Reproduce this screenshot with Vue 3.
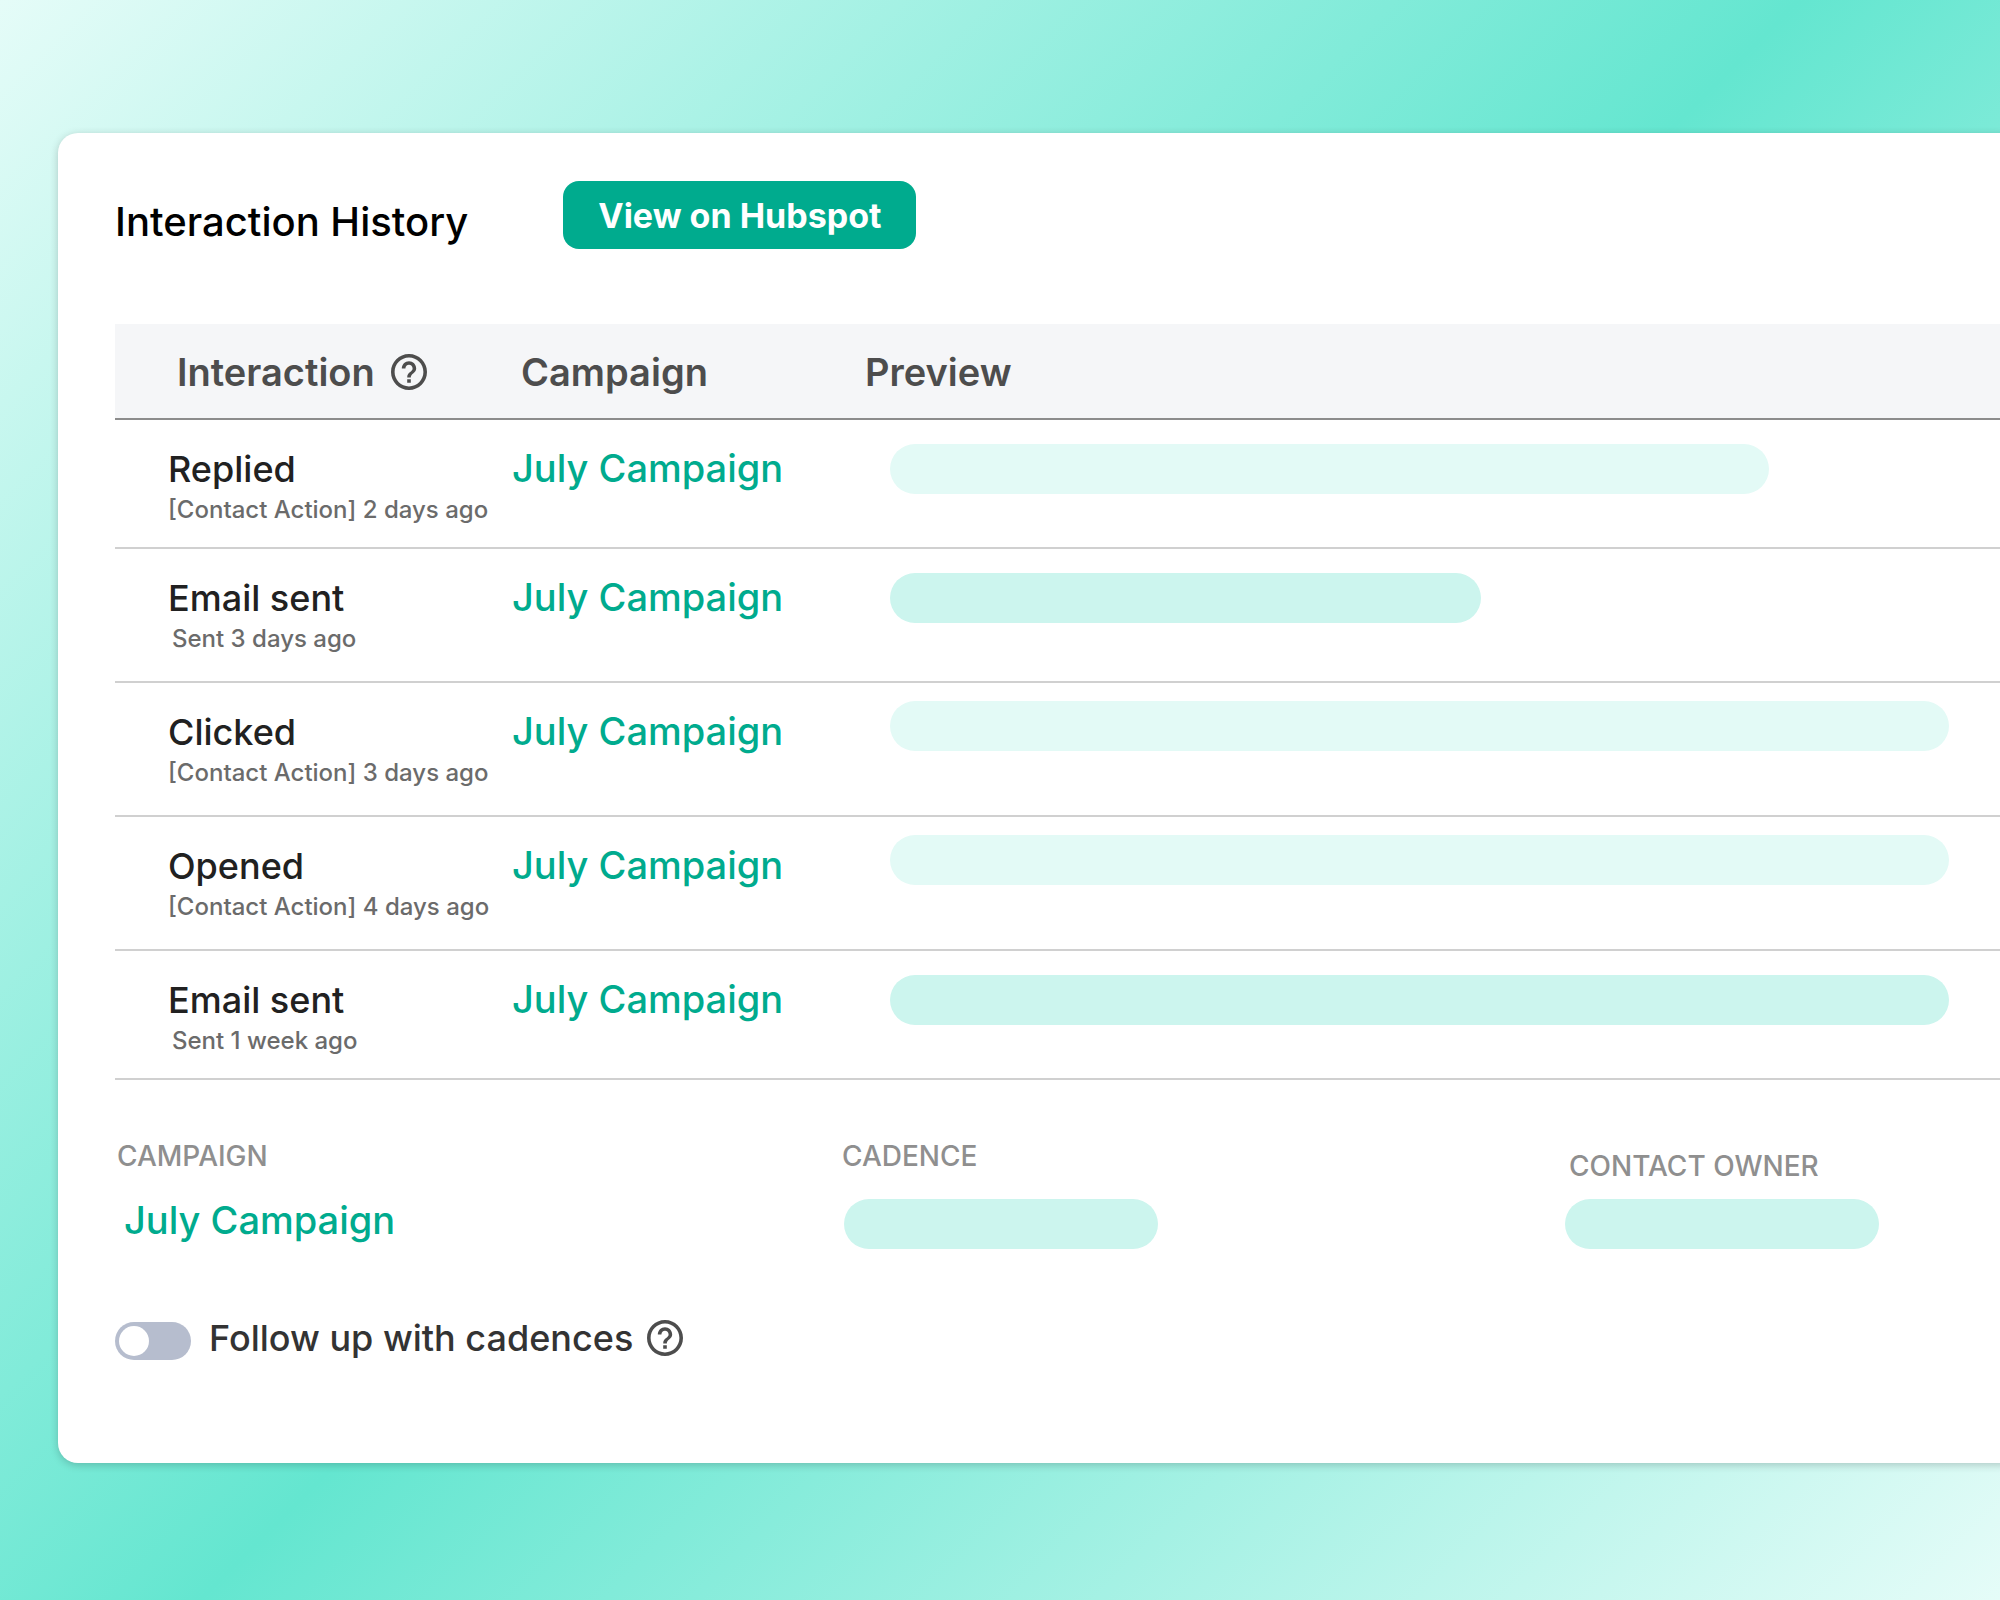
<script setup>
import { ref } from 'vue';

const followUp = ref(false);

// width is the share of the preview column taken by the placeholder
const interactions = [
  { id: 1, name: 'Replied', detail: '[Contact Action] 2 days ago', campaign: 'July Campaign', width: 79.2, type: 'contact' },
  { id: 2, name: 'Email sent', detail: 'Sent 3 days ago', campaign: 'July Campaign', width: 53.2, type: 'sent' },
  { id: 3, name: 'Clicked', detail: '[Contact Action] 3 days ago', campaign: 'July Campaign', width: 95.4, type: 'contact', tight: true },
  { id: 4, name: 'Opened', detail: '[Contact Action] 4 days ago', campaign: 'July Campaign', width: 95.4, type: 'contact', tight: true },
  { id: 5, name: 'Email sent', detail: 'Sent 1 week ago', campaign: 'July Campaign', width: 95.4, type: 'sent' }
];

const helpIcon = 'M11 18h2v-2h-2v2zm1-16C6.48 2 2 6.48 2 12s4.48 10 10 10 10-4.48 10-10S17.52 2 12 2zm0 18c-4.41 0-8-3.59-8-8s3.59-8 8-8 8 3.59 8 8-3.59 8-8 8zm0-14c-2.21 0-4 1.79-4 4h2c0-1.1.9-2 2-2s2 .9 2 2c0 2-3 1.75-3 5h2c0-2.25 3-2.5 3-5 0-2.21-1.79-4-4-4z';
</script>

<template>
  <main class="page">
    <section class="card">
      <header class="card-header">
        <h1 class="title">Interaction History</h1>
        <button type="button" class="hubspot-btn">View on Hubspot</button>
      </header>

      <table class="history">
        <thead>
          <tr>
            <th class="col-fixed" scope="col">
              <span class="th-label">
                Interaction
                <svg class="help-icon" viewBox="2 2 20 20" aria-hidden="true"><path :d="helpIcon" /></svg>
              </span>
            </th>
            <th class="col-fixed" scope="col">Campaign</th>
            <th scope="col">Preview</th>
          </tr>
        </thead>
        <tbody>
          <tr v-for="item in interactions" :key="item.id">
            <td>
              <div class="name">{{ item.name }}</div>
              <div class="detail" :class="item.type">{{ item.detail }}</div>
            </td>
            <td><a href="#" class="campaign-link">{{ item.campaign }}</a></td>
            <td class="preview" :class="{ tight: item.tight }">
              <div class="pill" :class="item.type" :style="{ width: item.width + '%' }"></div>
            </td>
          </tr>
        </tbody>
      </table>

      <dl class="summary">
        <div class="summary-item campaign">
          <dt>CAMPAIGN</dt>
          <dd><a href="#" class="campaign-link">July Campaign</a></dd>
        </div>
        <div class="summary-item cadence">
          <dt>CADENCE</dt>
          <dd><div class="pill short"></div></dd>
        </div>
        <div class="summary-item owner">
          <dt>CONTACT OWNER</dt>
          <dd><div class="pill short"></div></dd>
        </div>
      </dl>

      <div class="follow-up">
        <input id="follow-up" v-model="followUp" type="checkbox" role="switch" class="toggle" />
        <label for="follow-up">Follow up with cadences</label>
        <svg class="help-icon" viewBox="2 2 20 20" aria-hidden="true"><path :d="helpIcon" /></svg>
      </div>
    </section>
  </main>
</template>

<style>
body {
  margin: 0;
}
</style>

<style scoped>
.page {
  box-sizing: border-box;
  min-height: 100vh;
  padding: 133px 0 137px 58px;
  overflow: hidden;
  background: linear-gradient(135deg, #e5fcf8 0%, #64e6d0 50%, #e5fcf8 100%);
  font-family: Inter, "Liberation Sans", sans-serif;
}

/* The card runs past the right edge of the page */
.card {
  margin-right: -20px;
  padding: 48px 20px 103px 57px;
  background: #fff;
  border-radius: 20px;
  box-shadow: 0 2px 8px rgba(0, 0, 0, 0.2);
}

.card-header {
  display: flex;
  align-items: flex-end;
  gap: 95px;
  margin-bottom: 75px;
}

.title {
  margin: 0;
  font-size: 40px;
  font-weight: 500;
  line-height: 54px;
  color: #000;
}

.hubspot-btn {
  height: 68px;
  padding: 0 35px;
  border: none;
  border-radius: 16px;
  background: #00ab8e;
  color: #fff;
  font-family: inherit;
  font-size: 34px;
  font-weight: 700;
  cursor: pointer;
}

/* Interaction table */
.history {
  width: 100%;
  table-layout: fixed;
  border-spacing: 0;
}

.history th {
  box-sizing: border-box;
  height: 96px;
  padding: 2px 0 0 62px;
  background: #f5f6f8;
  border-bottom: 2px solid #8c8c8c;
  color: #4d4d4d;
  font-size: 38px;
  font-weight: 600;
  text-align: left;
}

.col-fixed {
  width: 344px;
}

.th-label {
  display: flex;
  align-items: center;
  gap: 16px;
}

.help-icon {
  flex: none;
  width: 36px;
  height: 36px;
  fill: #4d4d4d;
}

.history td {
  box-sizing: border-box;
  height: 134px;
  padding: 27px 0 0 53px;
  border-bottom: 2px solid #d0d0d0;
  vertical-align: top;
  white-space: nowrap;
}

.history tbody tr:first-child td,
.history tbody tr:last-child td {
  height: 129px;
}

.name {
  color: #212121;
  font-size: 36px;
  font-weight: 500;
  line-height: 44px;
}

.detail {
  margin-top: 3px;
  color: #6b6b6b;
  font-size: 24px;
  font-weight: 500;
  line-height: 32px;
}

.detail.sent {
  padding-left: 4px;
}

.campaign-link {
  color: #00ab8e;
  font-size: 38px;
  font-weight: 500;
  line-height: 42px;
  text-decoration: none;
}

.history td.preview {
  padding: 24px 0 0 87px;
}

.history td.preview.tight {
  padding-top: 18px;
}

.pill {
  height: 50px;
  border-radius: 25px;
  background: #ccf5ee;
}

.pill.contact {
  background: #e3faf6;
}

.pill.short {
  width: 314px;
}

/* Summary under the table */
.summary {
  display: grid;
  grid-template-columns: 5fr 5fr 3fr;
  margin: 58px 0 67px;
}

.summary-item {
  display: flex;
  flex-direction: column;
  justify-content: flex-end;
  gap: 25px;
}

.summary-item.owner {
  gap: 15px;
}

.summary dt {
  padding-left: 2px;
  color: #8f8f8f;
  font-size: 28px;
  font-weight: 500;
  line-height: 36px;
}

.summary-item.owner dt {
  padding-left: 4px;
}

.summary dd {
  height: 50px;
  margin: 0;
}

.summary-item.campaign dd {
  padding-left: 9px;
  line-height: 48px;
}

.summary-item.cadence dd {
  padding-left: 4px;
}

.follow-up {
  display: flex;
  align-items: center;
  height: 44px;
  color: #333;
  font-size: 36px;
  font-weight: 500;
  line-height: 44px;
}

.follow-up label {
  margin: 0 14px 0 18px;
}

.toggle {
  appearance: none;
  box-sizing: border-box;
  align-self: flex-end;
  width: 76px;
  height: 38px;
  margin: 0;
  padding: 4px;
  border-radius: 19px;
  background: #b6bdce;
  cursor: pointer;
}

.toggle::before {
  content: "";
  display: block;
  width: 30px;
  height: 30px;
  border-radius: 50%;
  background: #fff;
}

.toggle:checked {
  background: #00ab8e;
}

.toggle:checked::before {
  margin-left: auto;
}
</style>
